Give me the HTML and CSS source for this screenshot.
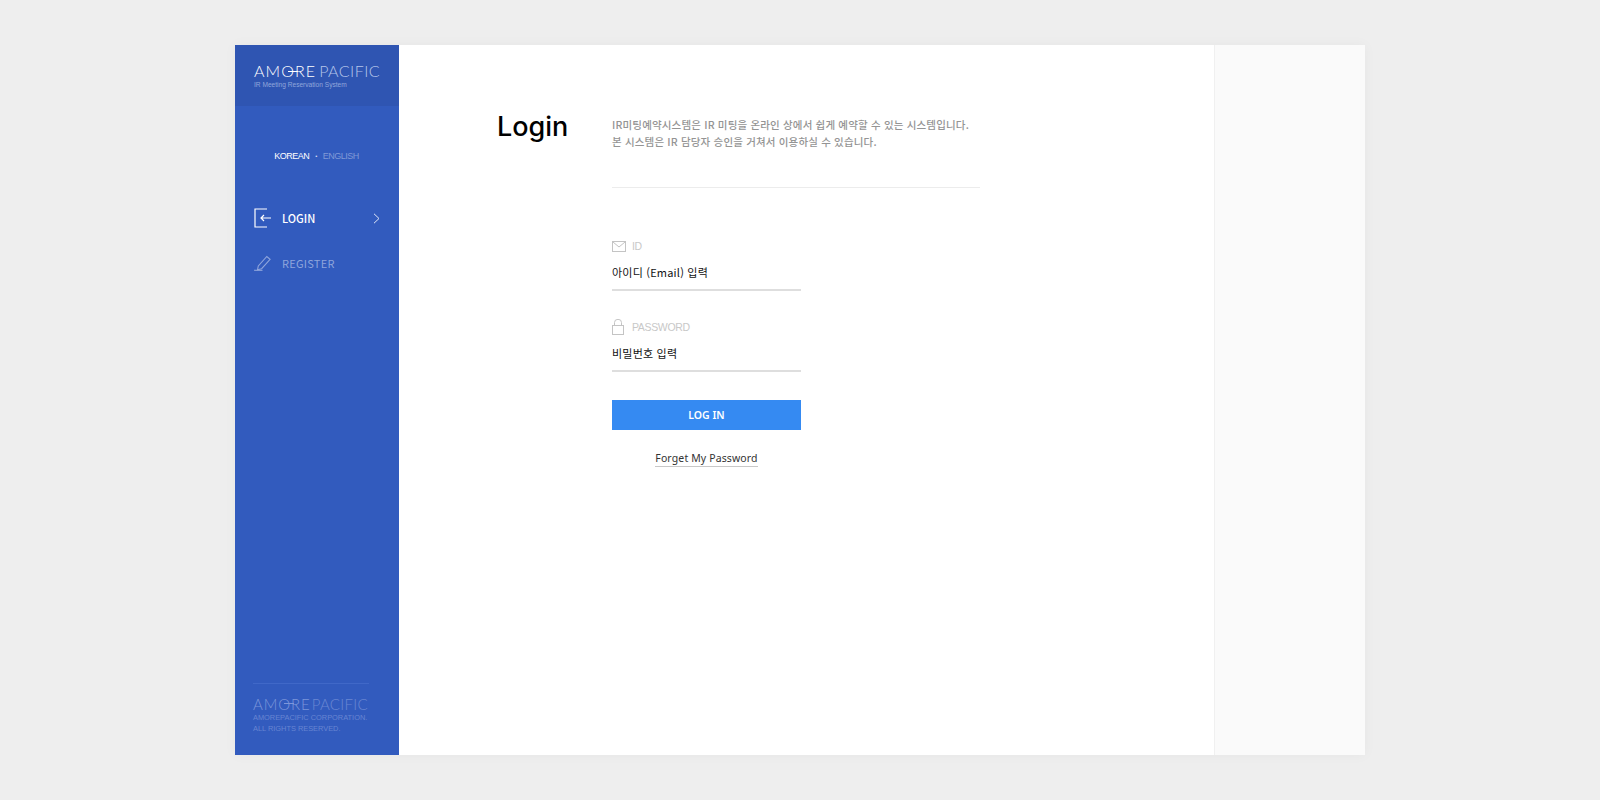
FILE: index.html
```html
<!DOCTYPE html>
<html lang="ko">
<head>
<meta charset="utf-8">
<title>Login</title>
<link rel="stylesheet" href="styles.css">
</head>
<body>
<div class="card">
  <aside class="side">
    <div class="brand">
      <div class="logo"><span class="logo-a">AM<span class="logo-o">O</span>RE</span><span class="logo-b">PACIFIC</span></div>
      <div class="brand-sub">IR Meeting Reservation System</div>
    </div>
    <div class="lang"><span class="lang-on">KOREAN</span><span class="lang-dot">•</span><span class="lang-off">ENGLISH</span></div>
    <nav class="nav">
      <a class="nav-item active">
        <svg class="nav-icon" width="18" height="20" viewBox="0 0 18 20" fill="none" stroke="#fff" stroke-width="1.2"><path d="M13 1H1v18h12"/><path d="M17 10H7M10 7l-3 3 3 3"/></svg>
        <span class="nav-label">LOGIN</span>
        <svg class="chev" width="7" height="11" viewBox="0 0 7 11" fill="none" stroke="#dfe6f7" stroke-width="1"><path d="M1 .8l5 4.700-5 4.700"/></svg>
      </a>
      <a class="nav-item muted">
        <svg class="nav-icon" width="18" height="16" viewBox="0 0 18 16" fill="none" stroke="#8fa5dc" stroke-width="1.1"><path d="M0 15.300h8.500"/><path d="M3.500 14.800l.8-3.800L12.800 1.500l3.300 2.800-8.500 9.400z"/></svg>
        <span class="nav-label">REGISTER</span>
      </a>
    </nav>
    <footer class="foot">
      <div class="foot-logo"><span class="foot-a">AM<span class="foot-o">O</span>RE</span><span class="foot-b">PACIFIC</span></div>
      <div class="foot-text">AMOREPACIFIC CORPORATION.<br>ALL RIGHTS RESERVED.</div>
    </footer>
  </aside>
  <main class="main">
    <div class="content">
      <h1 class="title">Login</h1>
      <div class="body">
        <p class="desc">IR미팅예약시스템은 IR 미팅을 온라인 상에서 쉽게 예약할 수 있는 시스템입니다.<br>본 시스템은 IR 담당자 승인을 거쳐서 이용하실 수 있습니다.</p>
        <form class="form">
          <div class="field">
            <div class="field-label">
              <svg width="14" height="11" viewBox="0 0 14 11" fill="none" stroke="#c4c4c4"><rect x=".5" y=".5" width="13" height="10"/><path d="M1 1l6 5 6-5"/></svg>
              <span>ID</span>
            </div>
            <div class="field-value">아이디 (Email) 입력</div>
          </div>
          <div class="field">
            <div class="field-label pw">
              <svg width="12" height="16" viewBox="0 0 12 16" fill="none" stroke="#c4c4c4"><rect x=".5" y="6.500" width="11" height="9"/><path d="M2.500 6.500V3.500a3.500 3.200 0 0 1 7 0v3"/></svg>
              <span>PASSWORD</span>
            </div>
            <div class="field-value">비밀번호 입력</div>
          </div>
          <button class="submit" type="button">LOG IN</button>
          <div class="forgot-row"><a class="forgot">Forget My Password</a></div>
        </form>
      </div>
    </div>
  </main>
  <div class="rail"></div>
</div>
</body>
</html>
```

FILE: styles.css
```css
* { box-sizing: border-box; }
html, body { margin: 0; height: 100%; }
body {
  background: #eeeeee;
  font-family: "Noto Sans CJK KR", "Noto Sans", sans-serif;
  padding: 45px 235px;
}
.card {
  display: flex;
  width: 1130px;
  height: 710px;
  background: #fff;
  box-shadow: 0 0 12px rgba(0, 0, 0, .04);
}
.side {
  width: 164px;
  flex: none;
  display: flex;
  flex-direction: column;
  background: #325bbe;
  color: #fff;
}
.brand {
  height: 61px;
  padding: 16px 0 0 19px;
  background: #2f55b2;
}
.logo {
  display: flex;
  font-family: "Lato", sans-serif;
  font-weight: 300;
  font-size: 16px;
  line-height: 20px;
  letter-spacing: .45px;
  white-space: nowrap;
}
.logo-a { color: #fff; letter-spacing: 1.1px; margin-right: 3px; }
.logo-b { color: #b5c5ea; }
.logo-o { position: relative; }
.logo-o::after {
  content: "";
  position: absolute;
  left: 7px;
  right: -3px;
  top: 10px;
  height: 1px;
  background: #fff;
}
.brand-sub {
  font-family: "Liberation Sans", sans-serif;
  font-size: 6.600px;
  line-height: 8px;
  color: #91a7dc;
}
.lang {
  display: flex;
  justify-content: center;
  align-items: center;
  margin-top: 43px;
  padding-right: 1px;
  height: 14px;
  font-family: "Liberation Sans", sans-serif;
  font-size: 9px;
  letter-spacing: -.5px;
}
.lang-on { color: #fff; }
.lang-dot { margin: 0 6px; font-size: 6px; color: #d5ddf2; }
.lang-off { color: #8099d6; }
.nav {
  display: flex;
  flex-direction: column;
  margin-top: 32px;
  padding: 0 19px;
}
.nav-item {
  display: flex;
  align-items: center;
  height: 45px;
  font-size: 11px;
}
.nav-icon { flex: none; }
.nav-label { margin-left: 10px; flex: 1; }
.active { font-weight: 500; color: #fff; }
.muted { color: #8fa5dc; letter-spacing: .25px; }
.muted .nav-label { margin-left: 10px; }
.chev { flex: none; margin-top: 2px; }
.foot {
  margin: auto 30px 21px 18px;
  padding-top: 12px;
  border-top: 1px solid #4068c8;
  color: #6785d2;
}
.foot-logo {
  display: flex;
  font-family: "Lato", sans-serif;
  font-weight: 300;
  font-size: 15px;
  line-height: 16px;
  letter-spacing: .3px;
  white-space: nowrap;
}
.foot-a { color: #7c96da; letter-spacing: .9px; margin-right: 1px; }
.foot-b { color: #6a87d3; }
.foot-o { position: relative; }
.foot-o::after {
  content: "";
  position: absolute;
  left: 6px;
  right: -3px;
  top: 8px;
  height: 1px;
  background: #7c96da;
}
.foot-text {
  font-family: "Liberation Sans", sans-serif;
  font-size: 7.400px;
  line-height: 11px;
  white-space: nowrap;
}
.main {
  flex: 1;
  padding: 0 0 0 98px;
}
.content { display: flex; width: 483px; }
.title {
  width: 115px;
  margin: 0;
  padding-top: 64px;
  font-family: "Inter", sans-serif;
  font-size: 27px;
  font-weight: 450;
  line-height: 36px;
  color: #000;
}
.body { width: 368px; padding-top: 71px; }
.desc {
  height: 72px;
  margin: 0;
  border-bottom: 1px solid #ececec;
  font-size: 10.500px;
  font-weight: 500;
  letter-spacing: .17px;
  line-height: 17px;
  color: #949494;
  white-space: nowrap;
}
.form {
  width: 189px;
  padding-top: 49px;
}
.field { height: 81px; }
.field-label {
  display: flex;
  align-items: center;
  gap: 6px;
  height: 18px;
  font-family: "Liberation Sans", sans-serif;
  font-size: 10.500px;
  letter-spacing: -.35px;
  color: #c8c8c8;
}
.field-label.pw { gap: 8px; }
.field-value {
  height: 36px;
  padding-top: 8px;
  font-size: 11px;
  letter-spacing: .2px;
  line-height: 18px;
  color: #111;
  border-bottom: 2px solid #dedede;
}
.submit {
  display: block;
  width: 100%;
  height: 30px;
  margin-top: 1px;
  border: 0;
  padding: 0;
  background: #358af2;
  color: #fff;
  font-family: "Noto Sans", sans-serif;
  font-size: 10.500px;
  font-weight: 600;
}
.forgot-row { text-align: center; margin-top: 13px; }
.forgot {
  display: inline-block;
  font-family: "Noto Sans", sans-serif;
  font-size: 10.500px;
  line-height: 15px;
  letter-spacing: .13px;
  color: #333;
  border-bottom: 1px solid #c8c8c8;
}
.rail {
  width: 151px;
  flex: none;
  background: #fafafa;
  border-left: 1px solid #f0f0f0;
}
```
